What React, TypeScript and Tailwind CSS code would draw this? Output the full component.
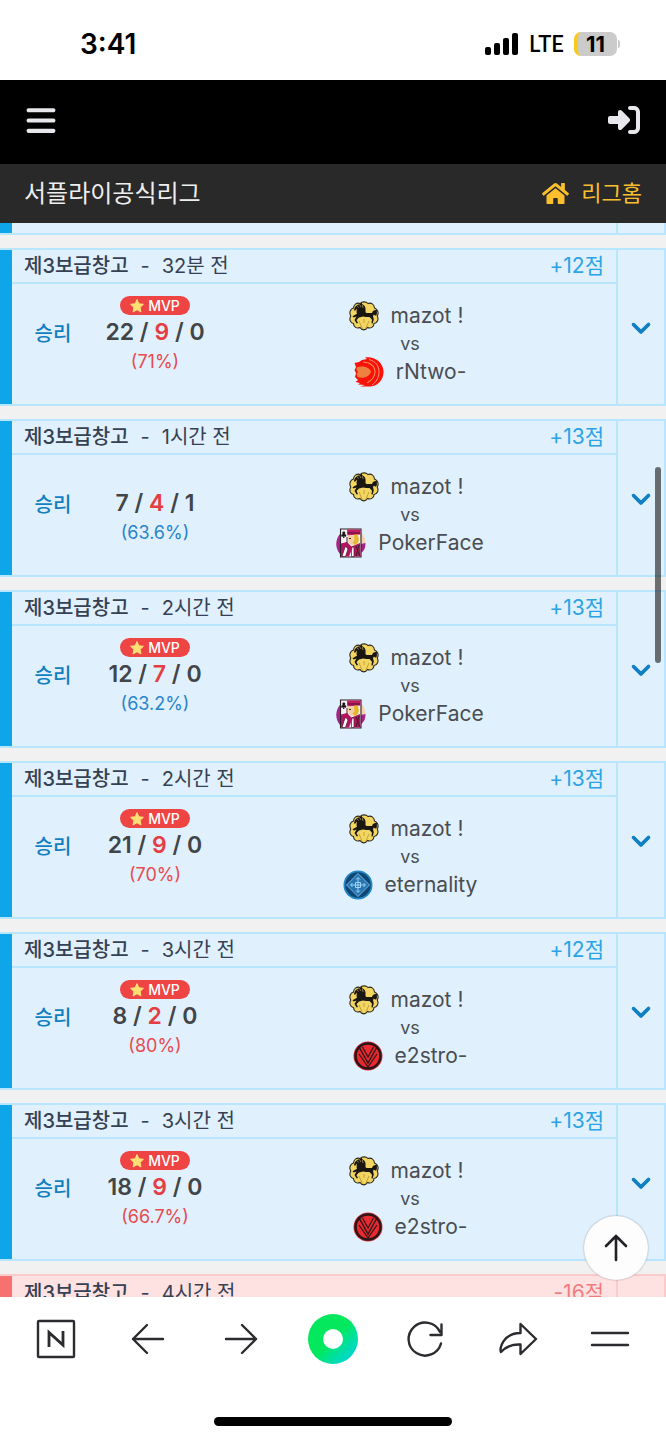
import React from 'react'
import clsx from 'clsx'
import { FaHome } from 'react-icons/fa'
import { FaBars, FaChevronDown, FaRightToBracket } from 'react-icons/fa6'

type Team = 'horse' | 'flame' | 'poker' | 'diamond' | 'vee'

interface Match {
  id: number
  place: string
  time: string
  points: string
  win: boolean
  mvp: boolean
  score: [number, number, number]
  rate: string
  high: boolean
  opponent: string
  team: Team
}

const place = '제3보급창고'

const matches: Match[] = [
  { id: 1, place, time: '32분 전', points: '+12점', win: true, mvp: true, score: [22, 9, 0], rate: '71%', high: true, opponent: 'rNtwo-', team: 'flame' },
  { id: 2, place, time: '1시간 전', points: '+13점', win: true, mvp: false, score: [7, 4, 1], rate: '63.6%', high: false, opponent: 'PokerFace', team: 'poker' },
  { id: 3, place, time: '2시간 전', points: '+13점', win: true, mvp: true, score: [12, 7, 0], rate: '63.2%', high: false, opponent: 'PokerFace', team: 'poker' },
  { id: 4, place, time: '2시간 전', points: '+13점', win: true, mvp: true, score: [21, 9, 0], rate: '70%', high: true, opponent: 'eternality', team: 'diamond' },
  { id: 5, place, time: '3시간 전', points: '+12점', win: true, mvp: true, score: [8, 2, 0], rate: '80%', high: true, opponent: 'e2stro-', team: 'vee' },
  { id: 6, place, time: '3시간 전', points: '+13점', win: true, mvp: true, score: [18, 9, 0], rate: '66.7%', high: true, opponent: 'e2stro-', team: 'vee' },
]

function TeamLogo({ team }: { team: Team }) {
  return (
    <svg viewBox="0 0 30 30" className="size-[30px] shrink-0" aria-hidden="true">
      {team === 'horse' && (
        <>
          <path
            d="M11 2.500C13 .3 17 .3 19 2.500c3-1.200 6.300.8 6.500 4.500 3.500 1.200 4.500 5 2.700 8 1.800 3 .3 7-3.200 7.500 0 3.500-3.500 5.500-6.500 4-2 3.200-5.500 3.200-7.500 0-3 1.500-6.500-.5-6.500-4C1 22 0 18 1.800 15 0 12 1 8 4.500 7 4.700 3.300 8 1.300 11 2.500z"
            fill="#f3d661"
            stroke="#2b261c"
            strokeWidth="1.100"
          />
          <path
            d="M5 9c.5-3 2.500-5.500 6-6l1.500-1.500.8 1.800c2.700 1 3.700 3.700 3.200 6.700-.2 1.500.5 2 2 2h4.500c.5-2.500 2.500-3.500 5-3-.5 1 .5 3.500-.5 5-1 1-2 .7-2.500-.5l-1 1.500.8 3.500-1.200 4-1.200-.3.6-3.500-2.500-2.700c-2.500-.3-4.500.2-6.500-.5l-4 1-2.500 2.500 1.500 3-1.300.6-2.200-3.600 2-3.500-2.800 1-1.200-1.200 4.500-2.500c-1-1.500 0-3.300-.2-5.300L6 10z"
            fill="#1a1713"
          />
          <path d="M10 20l3.500 8M20 20l-3.500 8M15 18v4" fill="none" stroke="#b39434" strokeWidth=".8" />
          <path d="M8 4.500l1.500 2M10.500 3.500L12 6M13.500 4l.5 3" stroke="#d8c078" strokeWidth=".6" />
        </>
      )}
      {team === 'flame' && (
        <>
          <path
            d="M8 3l5-1-2-1.500C20-1 29 5 29.500 14c.5 8-5.500 15-13 15.500H6l5-1.500-7-.5 2-1.500-4.500-1L4 23 1 20l1-4-1.500-3L2 10 .5 6 5 5z"
            fill="#f81209"
          />
          <path d="M2.500 10.500c5-2.500 13-.5 14.500 4C15.500 20 9 22 3.500 20l-1-3L4 15l-1.500-2z" fill="#ef8140" />
          <path d="M9 5c7 0 12 4 12 10 0 5-3 8-8 11" fill="none" stroke="#f0884f" strokeWidth="1.100" />
          <path d="M15 2.500c7 2 10 6.500 10 12.500s-3 10-7 13" fill="none" stroke="#f6a284" strokeWidth=".9" />
        </>
      )}
      {team === 'poker' && (
        <>
          <circle cx="15" cy="15" r="14.500" fill="#f3d2af" />
          <path d="M4 6c-5 6-5 14 0 20zM25 16l4.500-1c0 5-1.500 8-4.500 10z" fill="#a3248b" />
          <path d="M4.500 1h20.500v28H4.500z" fill="#f7eef0" stroke="#2c2028" strokeWidth="1.100" />
          <path d="M11 1.500h13.500v5l-13 1z" fill="#c01b64" />
          <path d="M11 5h13" fill="none" stroke="#421227" strokeWidth=".9" />
          <path d="M11.500 7.500h10V13l-2 3-4 1-3-3z" fill="#f3d0a4" />
          <path d="M18 6.500h3.500L23 11l-1 4-3.500 2-2-3 2-1z" fill="#e6b629" />
          <path d="M5 15.500l6-1.500 4.500 4.500L24 15l.5 13.500H18L16 21l-3 7.500H5z" fill="#b51461" />
          <path d="M9.500 18l2.500 3-2.500 7.500H6L8 22zM16.500 18l1.500 2v8.500h-2.500V22z" fill="#fff" stroke="#4c1430" strokeWidth=".7" />
          <path d="M20 18l4 10M23 17l-3 11M13 10.500h2M11 9v6" stroke="#33141f" strokeWidth=".9" />
          <path d="M7.800 3.500c1.800 0 1.800 2.200.8 2.700 1.800-.4 2.400 2.300.7 2.600l-1.200-.6.4 1.800H7l.4-1.800-1.200.6c-1.700-.3-1.100-3 .7-2.600-1-.5-.9-2.700.9-2.700z" fill="#191519" />
        </>
      )}
      {team === 'diamond' && (
        <>
          <circle cx="15" cy="15" r="14.500" fill="#2387c4" />
          <circle cx="15" cy="15" r="12.700" fill="#0f4674" />
          <path d="M15 3.500L26.500 15 15 26.500 3.500 15z" fill="#2874b3" stroke="#7cc0e8" strokeWidth=".9" />
          <path
            d="M15 8v14M8 15h14M12.500 12.500h5v5h-5zM13 9.500l2-2 2 2M13 20.500l2 2 2-2M9.500 13l-2 2 2 2M20.500 13l2 2-2 2"
            fill="none"
            stroke="#a0d6f4"
            strokeWidth="1"
          />
        </>
      )}
      {team === 'vee' && (
        <>
          <circle cx="15" cy="15" r="14.500" fill="#d9343a" />
          <circle cx="15" cy="15" r="13.700" fill="#2b1517" />
          <circle cx="15" cy="15" r="11.200" fill="#e8292f" />
          <path d="M5.500 5L15 22l9.500-17" fill="none" stroke="#2b1517" strokeWidth="1.400" />
          <path d="M6 13l9 13 9-13M9.500 6L15 16l5.500-10" fill="none" stroke="#2b1517" strokeWidth="1.200" />
        </>
      )}
    </svg>
  )
}

function StatusBar() {
  return (
    <div className="flex h-20 shrink-0 items-center justify-between bg-white pt-2 pr-[46px] pl-20 text-black">
      <span className="text-[28px] font-semibold leading-8">3:41</span>
      <div className="flex items-center gap-[10px]">
        <svg viewBox="0 0 34 22" className="h-[22px] w-[34px]" aria-hidden="true">
          <rect x="0" y="14" width="6" height="8" rx="2" />
          <rect x="9" y="10" width="6" height="12" rx="2" />
          <rect x="18" y="5" width="6" height="17" rx="2" />
          <rect x="27" y="0" width="6" height="22" rx="2" />
        </svg>
        <span className="font-['Lato',sans-serif] text-[22px] font-semibold leading-6">LTE</span>
        <div className="flex items-center gap-px">
          <div className="h-6 w-[43px] overflow-hidden rounded-[7px] border-l-4 border-[#fbc91b] bg-[#cbcbcb] pr-1 text-center text-[22px] font-bold leading-6">
            11
          </div>
          <div className="h-2 w-[2px] rounded-r-full bg-[#cbcbcb]" />
        </div>
      </div>
    </div>
  )
}

function MatchCard({ match }: { match: Match }) {
  const [kills, deaths, assists] = match.score
  return (
    <article className="flex h-[158px] shrink-0 border-y-2 border-r-2 border-sky-200 bg-[#e0f0fd]">
      <div className="w-3 bg-[#0ea5e9]" />
      <div className="flex min-w-0 flex-1 flex-col">
        <div className="flex h-[34px] items-center justify-between border-b-2 border-sky-200 px-3 text-[20px] text-gray-700">
          <p className="flex gap-3">
            <strong className="font-medium">{match.place}</strong>
            <span>-</span>
            <span>{match.time}</span>
          </p>
          <span className="text-[21px] text-[#2ba3e4]">{match.points}</span>
        </div>
        <div className="flex flex-1">
          <p className="w-[82px] pt-8 text-center text-[20px] font-medium leading-9 text-[#127fc1]">승리</p>
          <div className="flex w-[122px] flex-col items-center pt-3">
            <div className="h-5">
              {match.mvp && (
                <span className="flex h-[19px] items-center gap-1 rounded-full bg-[#ef4444] px-[10px] text-[14px] font-medium text-white">
                  <svg viewBox="0 0 14 14" className="size-[14px]" aria-hidden="true">
                    <path
                      d="M7 .6l1.900 4.200 4.500.5-3.300 3.100.9 4.600L7 10.700 3 13l.9-4.600L.6 5.300l4.500-.5z"
                      fill="#fde074"
                      stroke="#fde074"
                      strokeLinejoin="round"
                    />
                  </svg>
                  MVP
                </span>
              )}
            </div>
            <p className="text-[23px] font-semibold leading-8 whitespace-nowrap text-[#424548]">
              {kills} / <span className="text-[#e53e42]">{deaths}</span> / {assists}
            </p>
            <p className={clsx('text-[18px] leading-7', match.high ? 'text-[#e84a50]' : 'text-[#2884cb]')}>
              ({match.rate})
            </p>
          </div>
          <div className="flex flex-1 flex-col items-center justify-center pr-3 text-[21px] text-[#4a4d51]">
            <div className="flex h-[30px] items-center gap-3 pr-2">
              <TeamLogo team="horse" />
              mazot !
            </div>
            <span className="text-[18px] leading-[26px]">vs</span>
            <div className="flex h-[30px] items-center gap-3">
              <TeamLogo team={match.team} />
              {match.opponent}
            </div>
          </div>
        </div>
      </div>
      <button
        type="button"
        aria-label="자세히"
        className="flex w-12 items-center justify-center border-l-2 border-sky-200 text-[#1180c3]"
      >
        <FaChevronDown className="size-5 overflow-visible stroke-current stroke-[28]" />
      </button>
    </article>
  )
}

const navIcon = 'size-[50px] fill-none stroke-[#2b2b30] stroke-[2.4]'

function BottomBar() {
  return (
    <footer className="shrink-0 bg-white pb-[14px]">
      <nav className="flex h-[84px] items-center px-[10px] *:flex *:flex-1 *:justify-center">
        <a href="#home" aria-label="네이버 홈">
          <svg viewBox="0 0 50 50" className={navIcon} strokeLinejoin="round">
            <rect x="7" y="7" width="36" height="36" rx="1" />
            <path d="M18 33V18.500L32 31V17" strokeWidth="2.800" strokeLinejoin="miter" />
          </svg>
        </a>
        <button type="button" aria-label="뒤로">
          <svg viewBox="0 0 50 50" className={navIcon} strokeLinecap="round" strokeLinejoin="round">
            <path d="M40 25H10M24 11L10 25l14 14" />
          </svg>
        </button>
        <button type="button" aria-label="앞으로">
          <svg viewBox="0 0 50 50" className={navIcon} strokeLinecap="round" strokeLinejoin="round">
            <path d="M10 25h30M26 11l14 14-14 14" />
          </svg>
        </button>
        <button type="button" aria-label="그린닷">
          <span className="flex size-[50px] items-center justify-center rounded-full bg-linear-to-br from-[#03e85c] from-50% to-[#08cdf0]">
            <span className="size-5 rounded-full bg-white" />
          </span>
        </button>
        <button type="button" aria-label="새로고침">
          <svg viewBox="0 0 50 50" className={navIcon} strokeLinecap="round" strokeLinejoin="round">
            <path d="M41 29.500A16.500 16.500 0 1 1 40 18M41.500 10.500v10.500H30.500" />
          </svg>
        </button>
        <button type="button" aria-label="공유">
          <svg viewBox="0 0 50 50" className={navIcon} strokeLinecap="round" strokeLinejoin="round">
            <path d="M27.500 10L43 25 27.500 40V30.500C19 30 13 32.500 8 38c-2-3 2-19 19.500-19z" />
          </svg>
        </button>
        <button type="button" aria-label="메뉴">
          <svg viewBox="0 0 50 50" className={navIcon} strokeLinecap="round">
            <path d="M7 19h36M7 31h36" />
          </svg>
        </button>
      </nav>
      <div className="mx-auto mt-9 h-[9px] w-[238px] rounded-full bg-black" />
    </footer>
  )
}

export default function App() {
  return (
    <div className="flex h-screen flex-col overflow-hidden bg-[#f1f1f2] font-['Inter','Noto_Sans_CJK_KR',sans-serif]">
      <StatusBar />
      <header className="flex h-[84px] shrink-0 items-center justify-between bg-black px-[26px] pb-1 text-[#e8e8ec]">
        <button type="button" aria-label="메뉴 열기">
          <FaBars className="h-[33px] w-[30px]" />
        </button>
        <button type="button" aria-label="로그인">
          <FaRightToBracket className="size-8" />
        </button>
      </header>
      <div className="flex h-[59px] shrink-0 items-center justify-between bg-[#292929] px-6">
        <h1 className="text-[24px] text-[#eeeeee]">서플라이공식리그</h1>
        <a href="#league" className="flex items-center gap-3 text-[22px] text-[#fbbf2d]">
          <FaHome className="size-[27px]" />
          리그홈
        </a>
      </div>

      <main className="relative flex min-h-0 flex-1 flex-col gap-[13px] overflow-hidden">
        <div className="flex h-3 shrink-0 border-r-2 border-b-2 border-sky-200 bg-[#e0f0fd]">
          <div className="w-3 bg-[#0ea5e9]" />
          <div className="flex-1" />
          <div className="w-12 border-l-2 border-sky-200" />
        </div>
        {matches.map((match) => (
          <MatchCard key={match.id} match={match} />
        ))}
        <article className="flex h-[158px] shrink-0 border-t-2 border-r-2 border-[#fbcaca] bg-[#fee1e1]">
          <div className="w-3 bg-[#f87171]" />
          <div className="flex h-[34px] flex-1 items-center justify-between px-3 text-[20px] text-gray-700">
            <p className="flex gap-3">
              <strong className="font-medium">{place}</strong>
              <span>-</span>
              <span>4시간 전</span>
            </p>
            <span className="text-[21px] text-[#ef7d80]">-16점</span>
          </div>
          <div className="w-12 border-l-2 border-[#fbcaca]" />
        </article>

        <div className="absolute top-[244px] right-[5px] h-[196px] w-[6px] rounded-full bg-black/55" />
        <button
          type="button"
          aria-label="맨 위로"
          className="absolute right-[18px] bottom-[17px] flex size-16 items-center justify-center rounded-full bg-[#fdfdfe] shadow-[0_0_2px_rgba(0,0,0,0.35)]"
        >
          <svg viewBox="0 0 26 28" className="h-7 w-[26px] fill-none stroke-[#222226] stroke-[2.6]" strokeLinecap="round" strokeLinejoin="round">
            <path d="M13 26V2M3 12L13 2l10 10" />
          </svg>
        </button>
      </main>

      <BottomBar />
    </div>
  )
}
